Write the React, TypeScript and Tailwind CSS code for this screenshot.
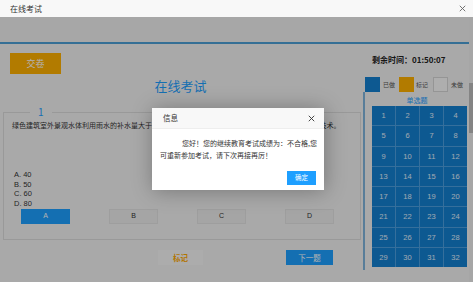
import React from 'react';

const nums = Array.from({ length: 32 }, (_, i) => i + 1);

function CloseIcon({ size, stroke }: { size: number; stroke: string }) {
  return (
    <svg width={size} height={size} viewBox="0 0 10 10" fill="none">
      <path d="M1.5 1.5 L8.5 8.5 M8.5 1.5 L1.5 8.5" stroke={stroke} strokeWidth="1.3" strokeLinecap="round" />
    </svg>
  );
}

export default function App() {
  return (
    <div className="relative flex h-[282px] w-[473px] flex-col overflow-hidden bg-[#f3f3f3] font-['Noto_Sans_CJK_SC','Noto_Sans',sans-serif] text-[#333]">
      {/* window title bar */}
      <div className="flex h-[17px] shrink-0 items-center justify-between bg-[#f8f8f8] pl-[10px] pr-[7px]">
        <span className="text-[8px] leading-none text-[#333]">在线考试</span>
        <CloseIcon size={7} stroke="#666" />
      </div>

      <div className="flex flex-1">
        <div className="flex flex-1 flex-col">
          {/* header band */}
          <div className="h-[25px] bg-[#f0f0f0]" />
          <div className="h-[2px] bg-[#4d9fd6]" />

          <div className="flex flex-1">
            {/* left column */}
            <div className="flex w-[361px] flex-col">
              <div className="ml-[10px] mt-[9px] flex h-[21px] w-[51px] items-center justify-center bg-[#ffb000] text-[9px] text-white">
                交卷
              </div>
              <div className="mt-[4px] text-center text-[13px] leading-[16px] text-[#1e9fff]">在线考试</div>

              <fieldset className="ml-[3px] mt-[12px] box-border h-[134px] w-[358px] border border-[#dcdcdc]">
                <legend className="ml-[26px] px-[8px] text-[10px] leading-[12px] text-[#1e9fff]">1</legend>
                <div className="mt-[1px] whitespace-nowrap pl-[8px] text-[7px] leading-[12px] text-[#333]">
                  绿色建筑室外景观水体利用雨水的补水量大于其水体蒸发量的（　　　　　）%，且采用生态水处理技术。
                </div>
                <div className="mt-[39px] pl-[10px] font-['Liberation_Sans',sans-serif] text-[7.5px] leading-[9.7px] text-[#333]">
                  <div>A. 40</div>
                  <div>B. 50</div>
                  <div>C. 60</div>
                  <div>D. 80</div>
                </div>
                <div className="flex gap-[39px] pl-[17px] font-['Liberation_Sans',sans-serif] text-[7px]">
                  <div className="flex h-[15px] w-[49px] items-center justify-center bg-[#1e9fff] text-white">A</div>
                  <div className="flex h-[15px] w-[49px] items-center justify-center border border-[#e2e2e2] bg-[#ececec] text-[#333]">B</div>
                  <div className="flex h-[15px] w-[49px] items-center justify-center border border-[#e2e2e2] bg-[#ececec] text-[#333]">C</div>
                  <div className="flex h-[15px] w-[49px] items-center justify-center border border-[#e2e2e2] bg-[#ececec] text-[#333]">D</div>
                </div>
              </fieldset>

              <div className="mt-[10px] flex items-center">
                <div className="ml-[158px] flex h-[15px] w-[45px] items-center justify-center bg-[#f7f7f7] text-[7.5px] font-bold text-[#ffa800]">
                  标记
                </div>
                <div className="ml-[83px] flex h-[15px] w-[47px] items-center justify-center bg-[#1e9fff] text-[7.5px] text-white">
                  下一题
                </div>
              </div>
            </div>

            {/* right sidebar */}
            <div className="flex flex-1 flex-col">
              <div className="mt-[10px] whitespace-nowrap pl-[11px] text-[8px] font-bold leading-[12px] text-[#222]">
                剩余时间：01:50:07
              </div>
              <div className="mt-[11px] flex items-center pl-[4px] text-[6px] text-[#555]">
                <div className="h-[15px] w-[15px] bg-[#1480d0]" />
                <span className="ml-[3px]">已做</span>
                <div className="ml-[4px] h-[15px] w-[15px] bg-[#ffb000]" />
                <span className="ml-[2px]">标记</span>
                <div className="ml-[5px] h-[15px] w-[15px] border border-[#d6d6d6] bg-[#fafafa]" />
                <span className="ml-[3px]">未做</span>
              </div>
              <div className="ml-[2px] flex flex-col border-l-2 border-[#7fb3db] pb-[3px] pt-[3px]">
                <div className="text-center text-[7px] leading-[10px] text-[#1e9fff]">单选题</div>
                <div className="ml-[7px] mt-[1px] grid h-[161px] w-[95px] grid-cols-4 grid-rows-8 gap-px bg-[#4d9fe0]">
                  {nums.map((n) => (
                    <div
                      key={n}
                      className="flex items-center justify-center bg-[#1480d0] font-['Liberation_Sans',sans-serif] text-[7.5px] text-[#e3f1ff]"
                    >
                      {n}
                    </div>
                  ))}
                </div>
              </div>
            </div>
          </div>
        </div>

        {/* scrollbar */}
        <div className="flex w-[4px] flex-col bg-[#eeeeee]">
          <div className="mt-[66px] h-[50px] bg-[#bdbdbd]" />
        </div>
      </div>

      {/* layer shade */}
      <div className="absolute inset-x-0 bottom-0 top-[17px] bg-black/30" />

      {/* dialog */}
      <div className="absolute left-[152px] top-[108px] flex h-[82px] w-[172px] flex-col bg-white shadow-[1px_1px_20px_rgba(0,0,0,0.3)]">
        <div className="flex h-[21px] items-center justify-between border-b border-[#eee] bg-[#f8f8f8] pl-[11px] pr-[9px]">
          <span className="text-[7.5px] text-[#333]">信息</span>
          <CloseIcon size={7} stroke="#333" />
        </div>
        <div className="pl-[8px] pr-[6px] pt-[8px] text-[7px] leading-[12px] text-[#333]">
          <div className="whitespace-nowrap indent-[22px]">您好！您的继续教育考试成绩为：不合格,您</div>
          <div className="whitespace-nowrap">可重新参加考试，请下次再接再厉！</div>
        </div>
        <div className="mt-auto mb-[5px] mr-[8px] flex justify-end">
          <div className="flex h-[14px] w-[29px] items-center justify-center bg-[#1e9fff] text-[6.5px] text-white">确定</div>
        </div>
      </div>
    </div>
  );
}
